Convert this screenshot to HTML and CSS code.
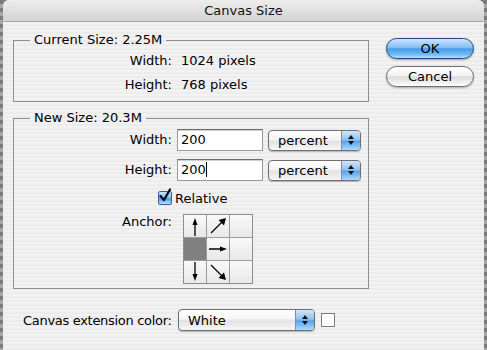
FILE: index.html
```html
<!DOCTYPE html>
<html>
<head>
<meta charset="utf-8">
<link rel="stylesheet" href="styles.css">
</head>
<body>
<div class="window">
  <div class="titlebar">Canvas Size</div>
  <div class="content">
    <div class="main">
      <div class="left">
        <fieldset class="group g1">
          <legend>Current Size: 2.25M</legend>
          <div class="grid">
            <div class="lbl">Width:</div><div class="val">1024 pixels</div>
            <div class="lbl">Height:</div><div class="val">768 pixels</div>
          </div>
        </fieldset>
        <fieldset class="group g2">
          <legend>New Size: 20.3M</legend>
          <div class="grid grid2">
            <div class="lbl">Width:</div>
            <div class="ctl"><div class="field">200</div><div class="popup pct"><span class="ptext">percent</span><span class="parrows"><svg width="8" height="12" viewBox="0 0 8 12"><path d="M4 1 L7 5 L1 5 Z M4 11 L7 7 L1 7 Z" fill="#111"/></svg></span></div></div>
            <div class="lbl">Height:</div>
            <div class="ctl"><div class="field">200<span class="caret"></span></div><div class="popup pct"><span class="ptext">percent</span><span class="parrows"><svg width="8" height="12" viewBox="0 0 8 12"><path d="M4 1 L7 5 L1 5 Z M4 11 L7 7 L1 7 Z" fill="#111"/></svg></span></div></div>
            <div></div>
            <div class="check-row"><span class="checkbox"><svg width="16" height="16" viewBox="0 0 16 16"><path d="M2.5 8 L6 12 L12 1.5" stroke="#0a0a20" stroke-width="2.3" fill="none" stroke-linecap="round" stroke-linejoin="round"/></svg></span><span>Relative</span></div>
            <div class="lbl anchor-lbl">Anchor:</div>
            <div class="anchor">
              <div class="cell"><svg width="22" height="22" viewBox="0 0 22 22"><path d="M11 21 V6" stroke="#000" stroke-width="1.3"/><path d="M11 3 L13.5 10 L8.5 10 Z" fill="#000"/></svg></div>
              <div class="cell"><svg width="22" height="22" viewBox="0 0 22 22"><path d="M4 18 L16 6" stroke="#000" stroke-width="1.3"/><path d="M19 3 L17 10.5 L11.5 5 Z" fill="#000"/></svg></div>
              <div class="cell"></div>
              <div class="cell filled"></div>
              <div class="cell"><svg width="22" height="22" viewBox="0 0 22 22"><path d="M2 11 H16" stroke="#000" stroke-width="1.3"/><path d="M20 11 L13 13.5 L13 8.5 Z" fill="#000"/></svg></div>
              <div class="cell"></div>
              <div class="cell"><svg width="22" height="22" viewBox="0 0 22 22"><path d="M11 1 V16" stroke="#000" stroke-width="1.3"/><path d="M11 20 L13.5 13 L8.5 13 Z" fill="#000"/></svg></div>
              <div class="cell"><svg width="22" height="22" viewBox="0 0 22 22"><path d="M4 4 L16 16" stroke="#000" stroke-width="1.3"/><path d="M19 19 L11.5 17 L17 11.5 Z" fill="#000"/></svg></div>
              <div class="cell"></div>
            </div>
          </div>
        </fieldset>
      </div>
      <div class="buttons">
        <div class="btn ok">OK</div>
        <div class="btn cancel">Cancel</div>
      </div>
    </div>
    <div class="bottom">
      <span class="blbl">Canvas extension color:</span>
      <div class="popup color"><span class="ptext">White</span><span class="parrows"><svg width="8" height="12" viewBox="0 0 8 12"><path d="M4 1 L7 5 L1 5 Z M4 11 L7 7 L1 7 Z" fill="#111"/></svg></span></div>
      <span class="swatch"></span>
    </div>
  </div>
</div>
</body>
</html>
```
FILE: styles.css
```css
* { box-sizing: border-box; }
html, body { margin: 0; padding: 0; }
body {
  width: 487px;
  height: 350px;
  overflow: hidden;
  font-family: "DejaVu Sans", sans-serif;
  font-size: 12px;
  color: #000;
  background: repeating-linear-gradient(to bottom, #7c7c7c 0 4px, #a6a6a6 4px 8px);
  padding: 0 3px;
}
.window {
  width: 481px;
  height: 350px;
  border-radius: 6px 6px 0 0;
  background: repeating-linear-gradient(to bottom, #ececec 0 2px, #f2f2f2 2px 4px);
  overflow: hidden;
}
.titlebar {
  height: 22px;
  line-height: 22px;
  text-align: center;
  font-size: 13px;
  font-weight: normal;
  color: #111;
  background: linear-gradient(to bottom, #ededed, #d2d2d2);
  border-bottom: 1px solid #a8a8a8;
}
.content { padding: 0 0 0 10px; }
.main { display: flex; }
.left { width: 356px; }
.group {
  margin: 0;
  border: 1px solid #8e8e8e;
  padding: 0;
}
.group legend {
  margin-left: 16px;
  padding: 0 4px;
  font-size: 13px;
  line-height: 14px;
}
.g1 { margin-top: 11px; height: 69px; }
.g2 { margin-top: 9px; height: 178px; }
.grid {
  display: grid;
  grid-template-columns: 158px auto;
  column-gap: 9px;
  align-items: center;
}
.g1 .grid { row-gap: 8px; padding-top: 6px; grid-auto-rows: 16px; }
.lbl { text-align: right; line-height: 16px; font-size: 13px; }
.val { font-size: 13px; line-height: 16px; }
.grid2 { column-gap: 5px; padding-top: 4px; grid-template-rows: 22px 22px 18px 70px; row-gap: 8px; }
.ctl { display: flex; align-items: center; gap: 5px; }
.field {
  width: 86px;
  height: 22px;
  background: #fff;
  border: 1px solid #9a9a9a;
  border-top-color: #6e6e6e;
  box-shadow: inset 0 1px 0 #d0d0d0;
  font-size: 13px;
  line-height: 19px;
  padding-left: 3px;
}
.caret {
  display: inline-block;
  width: 1px;
  height: 15px;
  background: #000;
  vertical-align: -3px;
}
.popup {
  height: 21px;
  border: 1px solid #6f6f6f;
  border-radius: 4px;
  background: linear-gradient(to bottom, #ffffff, #f4f4f4 45%, #e2e2e2 55%, #f6f6f6);
  display: flex;
  align-items: center;
  box-shadow: 0 1px 1px rgba(0,0,0,0.25);
  overflow: hidden;
  flex: none;
}
.pct { width: 93px; }
.ptext { flex: 1; padding-left: 9px; font-size: 13px; line-height: 19px; }
.parrows {
  width: 19px;
  height: 100%;
  display: flex;
  align-items: center;
  justify-content: center;
  background: linear-gradient(to bottom, #cfe6fb, #8ec3f2 45%, #5aa3ea 55%, #a9dcfd);
  border-left: 1px solid #7a8fae;
}
.check-row { display: flex; align-items: center; gap: 3px; font-size: 13px; margin-left: -19px; }
.checkbox {
  width: 14px;
  height: 14px;
  border: 1px solid #3c5f97;
  border-radius: 2px;
  background: linear-gradient(to bottom, #c9e4fb, #7fbaf0 50%, #4f9be6 55%, #b2e0fc);
  position: relative;
  display: inline-block;
}
.checkbox svg { position: absolute; left: -1px; top: -4px; }
.anchor-lbl { align-self: start; margin-top: -1px; }
.anchor {
  width: 70px;
  height: 70px;
  display: grid;
  grid-template-columns: repeat(3, 1fr);
  grid-template-rows: repeat(3, 1fr);
  border: 1px solid #8d8d8d;
  margin-left: 6px;
  margin-top: -2px;
}
.cell {
  border-right: 1px solid #9c9c9c;
  border-bottom: 1px solid #9c9c9c;
  background: linear-gradient(to bottom, #f9f9f9, #e8e8e8);
  display: flex;
  align-items: center;
  justify-content: center;
}
.cell:nth-child(3n) { border-right: none; }
.cell:nth-child(n+7) { border-bottom: none; }
.cell.filled { background: #808080; }
.buttons {
  margin-left: 17px;
  margin-top: 16px;
  display: flex;
  flex-direction: column;
  gap: 7px;
}
.btn {
  width: 88px;
  height: 21px;
  border-radius: 11px;
  text-align: center;
  font-size: 13px;
  line-height: 19px;
}
.ok {
  border: 1px solid #23467c;
  background: linear-gradient(to bottom, #cfe7fb, #84bdf2 45%, #4a9ae8 52%, #6cb9f5 80%, #b3e4fd);
  box-shadow: 0 1px 2px rgba(0,0,0,0.35);
}
.cancel {
  border: 1px solid #6e6e6e;
  background: linear-gradient(to bottom, #ffffff, #f3f3f3 45%, #dcdcdc 52%, #f2f2f2 85%, #ffffff);
  box-shadow: 0 1px 2px rgba(0,0,0,0.3);
}
.bottom {
  display: flex;
  align-items: center;
  margin-top: 20px;
  padding-left: 10px;
}
.blbl { font-size: 13px; white-space: nowrap; letter-spacing: -0.3px; width: 155px; flex: none; }
.color { width: 137px; height: 22px; }
.swatch {
  width: 14px;
  height: 14px;
  background: #fff;
  border: 1px solid #7d7d7d;
  margin-left: 6px;
}
```
